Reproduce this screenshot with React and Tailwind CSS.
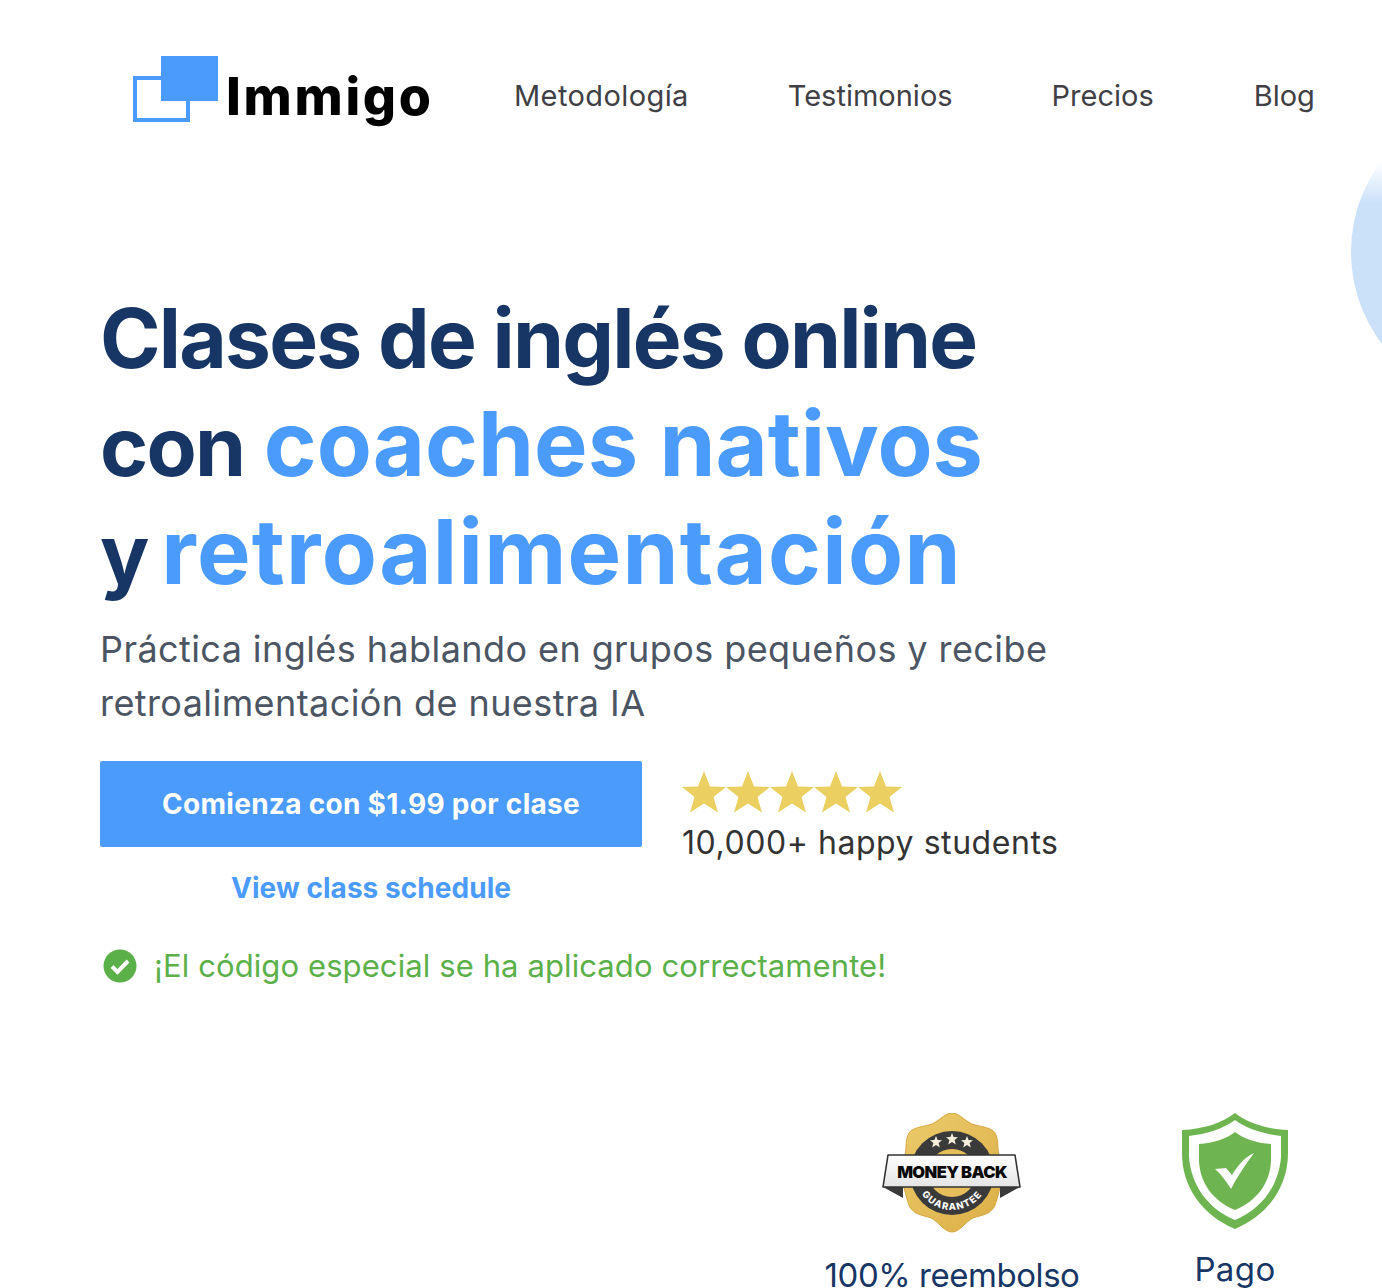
import React from 'react'

const font = { fontFamily: 'Inter, "Liberation Sans", sans-serif' }

function Logo() {
  return (
    <div className="relative w-[298px] h-[74px] shrink-0 flex items-start">
      <div className="w-[57px] h-[46px] shrink-0 mt-[21px] border-[4px] border-[#4a9bfb] bg-white" />
      <div className="absolute left-[28px] top-[1px] w-[57px] h-[45px] bg-[#4a9bfb]" />
      <span className="ml-[36px] mt-[16px] text-[52px] leading-none font-extrabold tracking-[2.7px] text-black">Immigo</span>
    </div>
  )
}

function Star() {
  return (
    <svg width="44" height="42" viewBox="0 0 44 42">
      <polygon fill="#ebcf61" points="22,0 28,15.5 44,16 31.5,26 36,41.5 22,32.5 8,41.5 12.5,26 0,16 16,15.5" />
    </svg>
  )
}

const smallStar = '0,-6 1.6,-2 6,-1.8 2.6,1 3.8,5.5 0,3 -3.8,5.5 -2.6,1 -6,-1.8 -1.6,-2'

function MoneyBackBadge() {
  const gold = 'M70 0 C78 0 84 10 93 12 C101 14 110 15 113 20 C117 27 115 34 117 42 C119 50 120 55 120 60 C120 70 117 78 115 86 C113 93 112 96 106 100 C100 103 96 103 91 105 C84 108 78 119 70 119 C62 119 56 108 49 105 C44 103 40 103 34 100 C28 96 27 93 25 86 C23 78 20 70 20 60 C20 55 21 50 23 42 C25 34 23 27 27 20 C30 15 39 14 47 12 C56 10 62 0 70 0 Z'
  return (
    <svg width="140" height="122" viewBox="0 0 140 122">
      <defs>
        <linearGradient id="gold" x1="0" y1="0" x2="1" y2="1">
          <stop offset="0" stopColor="#eccb6c" />
          <stop offset="1" stopColor="#dcae45" />
        </linearGradient>
        <linearGradient id="band" x1="0" y1="0" x2="0" y2="1">
          <stop offset="0" stopColor="#ffffff" />
          <stop offset="1" stopColor="#e4e4e4" />
        </linearGradient>
        <path id="curve" d="M33 60 A37 37 0 0 0 107 60" />
      </defs>
      <path d={gold} fill="url(#gold)" stroke="#d5a540" strokeWidth="1" />
      <circle cx="70" cy="60" r="42" fill="#3a3a3a" />
      <circle cx="70" cy="60" r="24" fill="#e5bd5a" />
      <polygon points="1,74 21,85 21,74" fill="#3a3a3a" />
      <polygon points="138,74 118,85 118,74" fill="#3a3a3a" />
      <polygon points="6,42 133,42 138,74 1,74" fill="url(#band)" stroke="#333" strokeWidth="1.6" strokeLinejoin="round" />
      <text x="70" y="65" textAnchor="middle" fontFamily="Inter, sans-serif" fontWeight="900" fontSize="16.5" letterSpacing="-0.6" fill="#0a0a0a">MONEY BACK</text>
      <text fontFamily="Inter, sans-serif" fontWeight="800" fontSize="9.5" letterSpacing="1.2" fill="#fff">
        <textPath href="#curve" startOffset="50%" textAnchor="middle">GUARANTEE</textPath>
      </text>
      <polygon transform="translate(54 29)" fill="#f5efdc" points={smallStar} />
      <polygon transform="translate(70 26)" fill="#f5efdc" points={smallStar} />
      <polygon transform="translate(85 29)" fill="#f5efdc" points={smallStar} />
    </svg>
  )
}

function ShieldBadge() {
  return (
    <svg width="106" height="116" viewBox="0 0 106 116">
      <path fill="#6eb551" d="M53 0 C66 10 84 16 106 17 L106 40 C106 74 86 102 53 116 C20 102 0 74 0 40 L0 17 C22 16 40 10 53 0 Z" />
      <path fill="#fff" d="M53 7 C65 16 82 21 99 23 L99 44 C97 72 80 96 53 107 C26 96 9 72 7 44 L7 23 C24 21 41 16 53 7 Z" />
      <path fill="#6eb551" d="M53 19 C62 26 74 30 89 31 L89 48 C88 70 75 88 53 97 C31 88 18 70 17 48 L17 31 C32 30 44 26 53 19 Z" />
      <path fill="#fff" d="M33 56 L44 55 L50 62 C56 52 63 44 72 40 C64 51 55 64 49 76 C44 68 39 61 33 56 Z" />
    </svg>
  )
}

export default function App() {
  return (
    <div className="relative h-[1288px] overflow-hidden bg-white" style={font}>
      {/* decorative circle on the right edge */}
      <div className="absolute left-[1351px] top-[100px] w-[304px] h-[304px] rounded-full bg-[linear-gradient(180deg,#ffffff_20%,#cbe1fa_34%)]" />

      <header className="flex items-center pl-[133px] pt-[55px]">
        <Logo />
        <nav className="flex items-center ml-[83px] gap-[99px] text-[29px] leading-none text-[#3f3f46] pt-[7px] whitespace-nowrap">
          <a className="tracking-[0.4px]">Metodología</a>
          <a>Testimonios</a>
          <a>Precios</a>
          <a className="ml-px">Blog</a>
        </nav>
      </header>

      <main className="pl-[100px] pt-[156px]">
        <h1 className="text-[82px] leading-[108px] font-bold tracking-[-1.8px] text-[#173665]">
          <div>Clases de inglés online</div>
          <div>con <span className="ml-[2px] text-[90px] leading-none tracking-[0px] text-[#4a9bfb]">coaches nativos</span></div>
          <div>y <span className="-ml-[4px] text-[90px] leading-none tracking-[1.3px] text-[#4a9bfb]">retroalimentación</span></div>
        </h1>
        <p className="mt-[13px] text-[36px] leading-[54px] text-[#4b5563] tracking-[0.42px]">
          Práctica inglés hablando en grupos pequeños y recibe<br />
          retroalimentación de nuestra IA
        </p>

        <div className="flex mt-[31px] gap-[40px]">
          <div className="w-[542px]">
            <button className="w-full h-[86px] rounded-[2px] bg-[#4a9bfb] text-white text-[28px] font-bold tracking-[0.3px]">
              Comienza con $1.99 por clase
            </button>
            <div className="mt-[24px] text-center text-[28px] leading-[34px] font-bold text-[#4a9bfb] tracking-[0.05px]">
              View class schedule
            </div>
          </div>
          <div className="pt-[10px]">
            <div className="flex">
              <Star /><Star /><Star /><Star /><Star />
            </div>
            <div className="mt-[10px] text-[32px] leading-[40px] text-[#333333] tracking-[0.55px]">10,000+ happy students</div>
          </div>
        </div>

        <div className="flex items-center mt-[41px] ml-[3px] gap-[17px]">
          <svg width="34" height="34" viewBox="0 0 34 34">
            <circle cx="17" cy="17" r="16.5" fill="#5bb04a" />
            <path d="M9 17.5 L14.5 23 L25 12" fill="none" stroke="#fff" strokeWidth="4" />
          </svg>
          <span className="text-[31px] leading-[40px] text-[#5bb04a] tracking-[0.1px]">¡El código especial se ha aplicado correctamente!</span>
        </div>

        <div className="flex mt-[127px]">
          <div className="ml-[725px] w-[254px] flex flex-col items-center">
            <MoneyBackBadge />
            <div className="mt-[20px] text-[33px] leading-[40px] text-[#173665] tracking-[-0.45px] whitespace-nowrap">100% reembolso</div>
          </div>
          <div className="ml-[103px] w-[106px] flex flex-col items-center">
            <ShieldBadge />
            <div className="mt-[20px] text-[33px] leading-[40px] text-[#173665] tracking-[0.4px]">Pago</div>
          </div>
        </div>
      </main>
    </div>
  )
}
